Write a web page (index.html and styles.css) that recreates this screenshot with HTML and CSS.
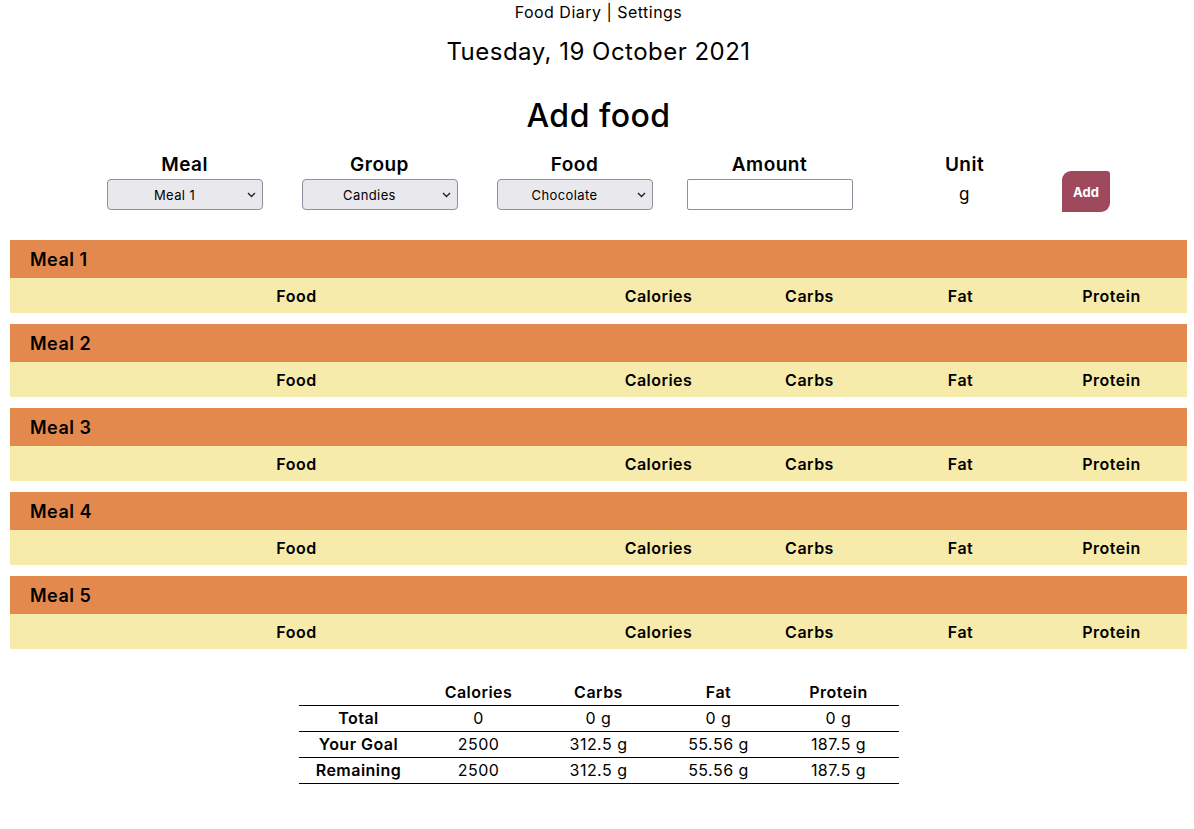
FILE: index.html
```html
<!DOCTYPE html>
<html lang="en">
<head>
<meta charset="utf-8">
<title>Food Diary</title>
<link rel="stylesheet" href="styles.css">
</head>
<body>
<nav class="topnav">Food Diary | Settings</nav>
<div class="date">Tuesday, 19 October 2021</div>
<h1 class="title">Add food</h1>

<form class="addform">
  <div class="field">
    <label class="flabel">Meal</label>
    <span class="selwrap">
      <select class="fselect"><option>Meal 1</option></select>
      <svg class="chev" width="9" height="6" viewBox="0 0 9 6"><path d="M1 1 L4.5 4.5 L8 1" fill="none" stroke="#222" stroke-width="1.4"/></svg>
    </span>
  </div>
  <div class="field">
    <label class="flabel">Group</label>
    <span class="selwrap">
      <select class="fselect"><option>Candies</option></select>
      <svg class="chev" width="9" height="6" viewBox="0 0 9 6"><path d="M1 1 L4.5 4.5 L8 1" fill="none" stroke="#222" stroke-width="1.4"/></svg>
    </span>
  </div>
  <div class="field">
    <label class="flabel">Food</label>
    <span class="selwrap">
      <select class="fselect"><option>Chocolate</option></select>
      <svg class="chev" width="9" height="6" viewBox="0 0 9 6"><path d="M1 1 L4.5 4.5 L8 1" fill="none" stroke="#222" stroke-width="1.4"/></svg>
    </span>
  </div>
  <div class="field">
    <label class="flabel">Amount</label>
    <input class="finput" type="text">
  </div>
  <div class="field">
    <label class="flabel">Unit</label>
    <span class="unit">g</span>
  </div>
  <div class="field btnfield">
    <button class="addbtn" type="button">Add</button>
  </div>
</form>

<section class="meal">
  <div class="mealhead">Meal 1</div>
  <div class="mealcols"><span>Food</span><span>Calories</span><span>Carbs</span><span>Fat</span><span>Protein</span></div>
</section>
<section class="meal">
  <div class="mealhead">Meal 2</div>
  <div class="mealcols"><span>Food</span><span>Calories</span><span>Carbs</span><span>Fat</span><span>Protein</span></div>
</section>
<section class="meal">
  <div class="mealhead">Meal 3</div>
  <div class="mealcols"><span>Food</span><span>Calories</span><span>Carbs</span><span>Fat</span><span>Protein</span></div>
</section>
<section class="meal">
  <div class="mealhead">Meal 4</div>
  <div class="mealcols"><span>Food</span><span>Calories</span><span>Carbs</span><span>Fat</span><span>Protein</span></div>
</section>
<section class="meal">
  <div class="mealhead">Meal 5</div>
  <div class="mealcols"><span>Food</span><span>Calories</span><span>Carbs</span><span>Fat</span><span>Protein</span></div>
</section>

<table class="summary">
  <thead>
    <tr><th></th><th>Calories</th><th>Carbs</th><th>Fat</th><th>Protein</th></tr>
  </thead>
  <tbody>
    <tr><th>Total</th><td>0</td><td>0 g</td><td>0 g</td><td>0 g</td></tr>
    <tr><th>Your Goal</th><td>2500</td><td>312.5 g</td><td>55.56 g</td><td>187.5 g</td></tr>
    <tr><th>Remaining</th><td>2500</td><td>312.5 g</td><td>55.56 g</td><td>187.5 g</td></tr>
  </tbody>
</table>
</body>
</html>
```

FILE: styles.css
```css
* { box-sizing: border-box; }

body {
  margin: 0 7px 0 10px;
  font-family: "Inter", "Lato", sans-serif;
  letter-spacing: 0.03em;
  color: #000;
  background: #fff;
}

.topnav {
  text-align: center;
  font-size: 16px;
  line-height: 24px;
  height: 24px;
}

.date {
  text-align: center;
  font-size: 24px;
  line-height: 36px;
  margin-top: 9px;
  padding-top: 1px;
}

.title {
  text-align: center;
  font-size: 32px;
  font-weight: 500;
  line-height: 48px;
  margin: 21px 0 0;
  padding-top: 1px;
}

.addform {
  display: grid;
  grid-template-columns: repeat(5, 195px) 48px;
  justify-content: center;
  margin-top: 10px;
  height: 90px;
}

.field {
  display: flex;
  flex-direction: column;
  align-items: center;
}

.flabel {
  font-size: 19px;
  font-weight: 600;
  line-height: 28px;
  height: 29px;
  padding-top: 1px;
}

.selwrap {
  position: relative;
  display: block;
  width: 156px;
  height: 31px;
}

.fselect {
  appearance: none;
  -webkit-appearance: none;
  width: 156px;
  height: 31px;
  padding: 0 20px 0 0;
  font-family: inherit;
  letter-spacing: 0.03em;
  font-size: 13px;
  text-align: center;
  text-align-last: center;
  background-color: #e9e9ed;
  border: 1px solid #8f8f9d;
  border-radius: 4px;
  color: #000;
}

.chev {
  position: absolute;
  right: 7px;
  top: 13px;
  pointer-events: none;
}

.finput {
  width: 166px;
  height: 31px;
  border: 1px solid #8f8f9d;
  border-radius: 2px;
  background: #fff;
}

.unit {
  font-size: 17px;
  line-height: 31px;
}

.btnfield {
  justify-content: flex-start;
}

.addbtn {
  margin-top: 21px;
  width: 48px;
  height: 41px;
  border: none;
  background: #9e4a5c;
  color: #fff;
  font-family: inherit;
  font-weight: 700;
  font-size: 13px;
  border-radius: 9px 3px 9px 0;
  padding: 0;
}

.meal {
  margin-bottom: 11px;
}

.mealhead {
  background: #e3894d;
  height: 38px;
  line-height: 38px;
  padding: 1px 0 0 20px;
  font-size: 18px;
  font-weight: 600;
}

.mealcols {
  display: grid;
  grid-template-columns: 1fr repeat(4, 151px);
  background: #f6ebab;
  height: 35px;
  line-height: 35px;
  padding-top: 1px;
  font-size: 16px;
  font-weight: 600;
  text-align: center;
}

.summary {
  margin: 30px auto 0;
  border-collapse: collapse;
  width: 600px;
  table-layout: fixed;
  font-size: 16px;
}

.summary th,
.summary td {
  width: 120px;
  text-align: center;
  height: 26px;
  padding: 0;
  border-bottom: 1px solid #000;
}

.summary th {
  font-weight: 600;
}

.summary td {
  font-weight: 400;
}
```
